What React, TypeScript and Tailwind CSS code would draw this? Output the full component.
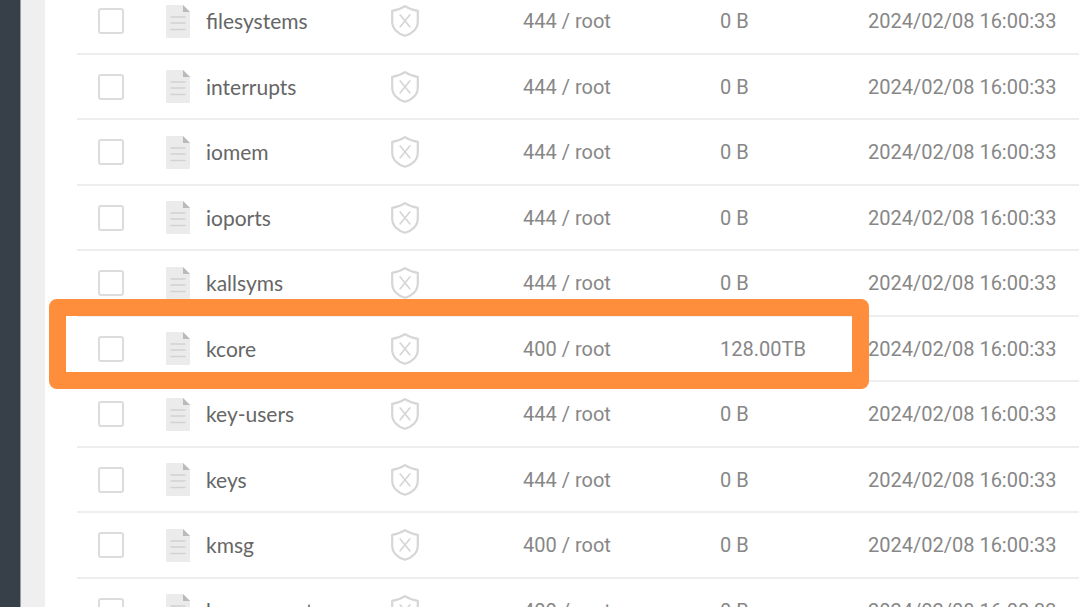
type FileRow = {
  name: string;
  permission: string;
  size: string;
  modified: string;
  highlighted?: boolean;
};

const files: FileRow[] = [
  { name: 'filesystems', permission: '444 / root', size: '0 B', modified: '2024/02/08 16:00:33' },
  { name: 'interrupts', permission: '444 / root', size: '0 B', modified: '2024/02/08 16:00:33' },
  { name: 'iomem', permission: '444 / root', size: '0 B', modified: '2024/02/08 16:00:33' },
  { name: 'ioports', permission: '444 / root', size: '0 B', modified: '2024/02/08 16:00:33' },
  { name: 'kallsyms', permission: '444 / root', size: '0 B', modified: '2024/02/08 16:00:33' },
  { name: 'kcore', permission: '400 / root', size: '128.00TB', modified: '2024/02/08 16:00:33', highlighted: true },
  { name: 'key-users', permission: '444 / root', size: '0 B', modified: '2024/02/08 16:00:33' },
  { name: 'keys', permission: '444 / root', size: '0 B', modified: '2024/02/08 16:00:33' },
  { name: 'kmsg', permission: '400 / root', size: '0 B', modified: '2024/02/08 16:00:33' },
  { name: 'kpagecount', permission: '400 / root', size: '0 B', modified: '2024/02/08 16:00:33' },
];

function FileIcon() {
  return (
    <svg className="block h-[33px] w-6 shrink-0" viewBox="0 0 24 33" aria-hidden="true">
      <path d="M1 0H17L24 7V32Q24 33 23 33H1Q0 33 0 32V1Q0 0 1 0Z" fill="#ebebeb" />
      <path d="M17 0L24 7H17Z" fill="#bababa" />
      <path d="M5 12H19M5 18H19M5 24.5H19" stroke="#d2d2d2" strokeWidth="1.5" strokeLinecap="round" />
    </svg>
  );
}

function ShieldIcon() {
  return (
    <svg className="block h-8 w-7" viewBox="0 0 28 32" fill="none" stroke="#d6d6d6" aria-hidden="true">
      <path
        d="M14 1.2C10.6 3.5 6 5.2 1.2 5.8V16.5C1.2 23.5 6.5 28.8 14 30.8C21.5 28.8 26.8 23.5 26.8 16.5V5.8C22 5.2 17.4 3.5 14 1.2Z"
        strokeWidth="2.2"
        strokeLinejoin="round"
      />
      <path d="M9.2 10L18.8 21.8M18.8 10L9.2 21.8" strokeWidth="1.7" strokeLinecap="round" />
    </svg>
  );
}

function Row({ name, permission, size, modified, highlighted }: FileRow) {
  return (
    <tr className="relative odd:h-[66px] even:h-[65px] [&>td]:border-b-2 [&>td]:border-[#eeeeee] [&>td]:p-0">
      <td>
        <input
          id={name}
          type="checkbox"
          className="ml-[21px] block size-[26px] appearance-none rounded-[3px] border-2 border-[#dcdcdc] bg-white checked:bg-[#dcdcdc]"
        />
        {/* sits over the neighbouring rows */}
        {highlighted && (
          <div className="pointer-events-none absolute -top-[18px] -left-7 h-[90px] w-[820px] rounded-lg border-[17px] border-[#ff8e3c]" />
        )}
      </td>
      <td>
        <label htmlFor={name} className="flex items-center gap-4 font-['Lato',sans-serif] text-[21px] text-[#666666]">
          <FileIcon />
          <span>{name}</span>
        </label>
      </td>
      <td>
        <ShieldIcon />
      </td>
      <td>{permission}</td>
      <td>{size}</td>
      <td>{modified}</td>
    </tr>
  );
}

export default function App() {
  return (
    <div className="flex h-screen overflow-hidden bg-[#efefef] font-['Roboto',sans-serif] text-xl leading-7 text-[#878787]">
      <aside className="w-[21px] shrink-0 border-r border-[#9a9ea3] bg-[#373f48]" />
      <main className="ml-6 min-w-0 flex-1 bg-white pl-8">
        <table className="-mt-[11px] w-full table-fixed border-separate border-spacing-0 whitespace-nowrap">
          <colgroup>
            <col className="w-[89px]" />
            <col className="w-[225px]" />
            <col className="w-[132px]" />
            <col className="w-[197px]" />
            <col className="w-[148px]" />
            <col />
          </colgroup>
          <tbody>
            {files.map((file) => (
              <Row key={file.name} {...file} />
            ))}
          </tbody>
        </table>
      </main>
    </div>
  );
}
